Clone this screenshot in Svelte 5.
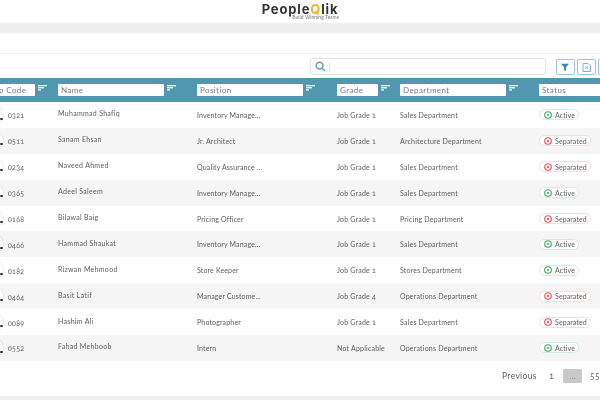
<script>
  const rows = [
    { code: '0321', name: 'Muhammad Shafiq', position: 'Inventory Manage...', grade: 'Job Grade 1', dept: 'Sales Department', active: true },
    { code: '0511', name: 'Sanam Ehsan', position: 'Jr. Architect', grade: 'Job Grade 1', dept: 'Architecture Department', active: false },
    { code: '0234', name: 'Naveed Ahmed', position: 'Quality Assurance ...', grade: 'Job Grade 1', dept: 'Sales Department', active: false },
    { code: '0365', name: 'Adeel Saleem', position: 'Inventory Manage...', grade: 'Job Grade 1', dept: 'Sales Department', active: true },
    { code: '0168', name: 'Bilawal Baig', position: 'Pricing Officer', grade: 'Job Grade 1', dept: 'Pricing Department', active: false },
    { code: '0466', name: 'Hammad Shaukat', position: 'Inventory Manage...', grade: 'Job Grade 1', dept: 'Sales Department', active: true },
    { code: '0182', name: 'Rizwan Mehmood', position: 'Store Keeper', grade: 'Job Grade 1', dept: 'Stores Department', active: true },
    { code: '0464', name: 'Basit Latif', position: 'Manager Custome...', grade: 'Job Grade 4', dept: 'Operations Department', active: false },
    { code: '0089', name: 'Hashim Ali', position: 'Photographer', grade: 'Job Grade 1', dept: 'Sales Department', active: false },
    { code: '0552', name: 'Fahad Mehboob', position: 'Intern', grade: 'Not Applicable', dept: 'Operations Department', active: true }
  ]
  const columns = ['Emp Code', 'Name', 'Position', 'Grade', 'Department']
</script>

<div class="page">
  <header>
    <div class="logo">People<span class="q">Q</span>lik</div>
    <div class="tagline">Build Winning Teams</div>
  </header>
  <div class="band"></div>
  <div class="rule"></div>

  <div class="toolbar">
    <div class="search">
      <svg width="11" height="11" viewBox="0 0 11 11" fill="none" stroke="#5b9fb8" stroke-width="1.5">
        <circle cx="4.6" cy="4.6" r="3.4" />
        <path d="M7.2 7.2 10 10" />
      </svg>
      <span class="divider"></span>
    </div>
    <button class="tool" aria-label="Filter">
      <svg width="8" height="8" viewBox="0 0 8 8"><path d="M0 .8h8L5 4.2V8L3 7V4.2z" fill="#3f8aa6" /></svg>
    </button>
    <button class="tool" aria-label="Export">
      <svg width="9" height="9" viewBox="0 0 9 9" fill="none" stroke="#7fb3c7"><path d="M1 .5h5l2.500 2.500v5.500H1z" /><path d="M3 6l2.500-2.500M3 4h2.500v2" stroke-width=".7" /></svg>
    </button>
    <button class="tool" aria-label="More"></button>
  </div>

  <div class="table">
    <div class="row head">
      {#each columns as col}
        <div class="cell">
          <span class="field">{col}</span>
          <svg class="sort" width="9" height="6" viewBox="0 0 9 6" fill="#fff">
            <rect width="9" height="1.300" />
            <rect y="2.200" width="6" height="1.200" />
            <rect y="4.300" width="3" height="1.200" />
          </svg>
        </div>
      {/each}
      <div class="cell"><span class="field">Status</span></div>
    </div>

    {#each rows as r}
      <div class="row body">
        <div class="cell code">
          <span class="avatar"><i></i></span>
          <span class="num">{r.code}</span>
        </div>
        <div class="cell name">{r.name}</div>
        <div class="cell position">{r.position}</div>
        <div class="cell">{r.grade}</div>
        <div class="cell">{r.dept}</div>
        <div class="cell">
          <span class="pill" class:off={!r.active}>
            {#if r.active}
              <svg width="8" height="8" viewBox="0 0 8 8" fill="none" stroke="#37a85f" stroke-width="1.100">
                <circle cx="4" cy="4" r="3.300" />
                <circle cx="4" cy="4" r="1" fill="#37a85f" stroke="none" />
              </svg>
              Active
            {:else}
              <svg width="8" height="8" viewBox="0 0 8 8" fill="none" stroke="#e0525c" stroke-width="1.100">
                <circle cx="4" cy="4" r="3.300" />
                <path d="M2.800 2.800l2.400 2.400M5.200 2.800 2.800 5.200" stroke-width=".9" />
              </svg>
              Separated
            {/if}
          </span>
        </div>
      </div>
    {/each}
  </div>

  <nav class="pager">
    <span class="prev">Previous</span>
    <span class="page-num">1</span>
    <span class="ellipsis">...</span>
    <span class="last">55</span>
  </nav>
  <div class="foot"></div>
</div>

<style>
  :global(body) {
    margin: 0;
    overflow: hidden;
    background: #fff;
  }
  .page {
    width: 600px;
    height: 400px;
    overflow: hidden;
    transform: translateZ(0);
    font-family: Lato, 'Open Sans', sans-serif;
    color: #5c5c5c;
    font-variant-numeric: oldstyle-nums;
    display: flex;
    flex-direction: column;
  }
  header {
    height: 23px;
    flex: none;
    display: flex;
    flex-direction: column;
    align-items: center;
  }
  .logo {
    font-family: Inter, sans-serif;
    font-weight: 700;
    font-size: 13px;
    line-height: 12px;
    margin-top: 3px;
    color: #333;
    letter-spacing: 0.85px;
  }
  .q {
    color: #eeb32c;
  }
  .tagline {
    font-size: 5px;
    line-height: 5px;
    color: #777;
    align-self: flex-end;
    margin-right: 261px;
    letter-spacing: 0.05px;
  }
  .band {
    height: 10px;
    flex: none;
    background: #eee;
  }
  .rule {
    height: 21px;
    flex: none;
    border-bottom: 1px solid #f1f1f1;
    box-sizing: border-box;
  }
  .toolbar {
    height: 24px;
    flex: none;
    box-sizing: border-box;
    padding: 4px 0 0 310px;
    display: flex;
    gap: 1.5px;
    align-items: flex-start;
  }
  .search {
    width: 236px;
    height: 17px;
    flex: none;
    margin-right: 8px;
    box-sizing: border-box;
    border: 1px solid #dfe3e5;
    border-radius: 3px;
    display: flex;
    align-items: center;
    padding-left: 4px;
    gap: 3px;
  }
  .divider {
    width: 1px;
    height: 10px;
    background: #e3e3e3;
  }
  .tool {
    width: 19.500px;
    height: 16px;
    margin-top: 1px;
    flex: none;
    padding: 0;
    background: #fff;
    border: 1px solid #9cc5d4;
    border-radius: 2px;
    display: flex;
    align-items: center;
    justify-content: center;
  }
  .table {
    margin-left: -20px;
    width: 640px;
    flex: none;
  }
  .row {
    display: grid;
    grid-template-columns: 78px 139px 140px 63px 139px 81px;
    align-items: center;
  }
  .head {
    height: 24px;
    background: #5197b0;
  }
  .head .cell {
    display: flex;
    align-items: flex-start;
    gap: 3px;
  }
  .field {
    display: block;
    box-sizing: border-box;
    height: 12px;
    line-height: 12px;
    padding-left: 3px;
    background: #fff;
    border-radius: 1px;
    font-size: 8px;
    letter-spacing: 0.4px;
    color: #777;
    width: 106px;
    white-space: nowrap;
    overflow: hidden;
  }
  .head .cell:nth-child(1) .field {
    width: 55px;
    padding-left: 7px;
  }
  .head .cell:nth-child(4) .field {
    width: 41px;
  }
  .sort {
    margin-top: 1px;
  }
  .body {
    height: 25.9px;
    font-size: 7px;
    letter-spacing: 0.2px;
  }
  .body:nth-child(odd) {
    background: #f5f5f5;
  }
  .code {
    display: flex;
    align-items: center;
    align-self: stretch;
    position: relative;
    padding-left: 28px;
    padding-top: 1px;
    letter-spacing: 0.3px;
  }
  .avatar {
    position: absolute;
    left: 5px;
    top: 4px;
    width: 18px;
    height: 18px;
    border-radius: 50%;
    background: #fff;
    box-shadow: 0 0 2px #ccc;
  }
  .avatar i {
    position: absolute;
    left: 15px;
    top: 11.500px;
    width: 3px;
    height: 2px;
    border-radius: 1px;
    background: #333;
  }
  .name {
    margin-top: -3px;
    letter-spacing: 0.3px;
  }
  .position {
    letter-spacing: 0.15px;
  }
  .pill {
    display: inline-flex;
    align-items: center;
    gap: 3px;
    height: 11px;
    padding: 0 3px 0 4px;
    box-sizing: border-box;
    border: 1px solid #cdeedd;
    border-radius: 6px;
    background: #fff;
    white-space: nowrap;
    letter-spacing: 0.1px;
  }
  .pill.off {
    border-color: #f6dcdc;
  }
  .pager {
    height: 33px;
    flex: none;
    box-sizing: border-box;
    padding: 0 0 2px 502px;
    display: flex;
    align-items: center;
    font-size: 8.500px;
    letter-spacing: 0.35px;
    white-space: nowrap;
  }
  .prev {
    width: 46px;
  }
  .page-num {
    width: 16px;
    padding-left: 2px;
    box-sizing: border-box;
  }
  .ellipsis {
    width: 19px;
    height: 14px;
    flex: none;
    line-height: 14px;
    background: #c9c9c9;
    color: #8a8a8a;
    border-radius: 1px;
    text-align: center;
    margin-right: 8px;
  }
  .foot {
    height: 4px;
    flex: none;
    margin-top: 2px;
    background: #eee;
  }
</style>
